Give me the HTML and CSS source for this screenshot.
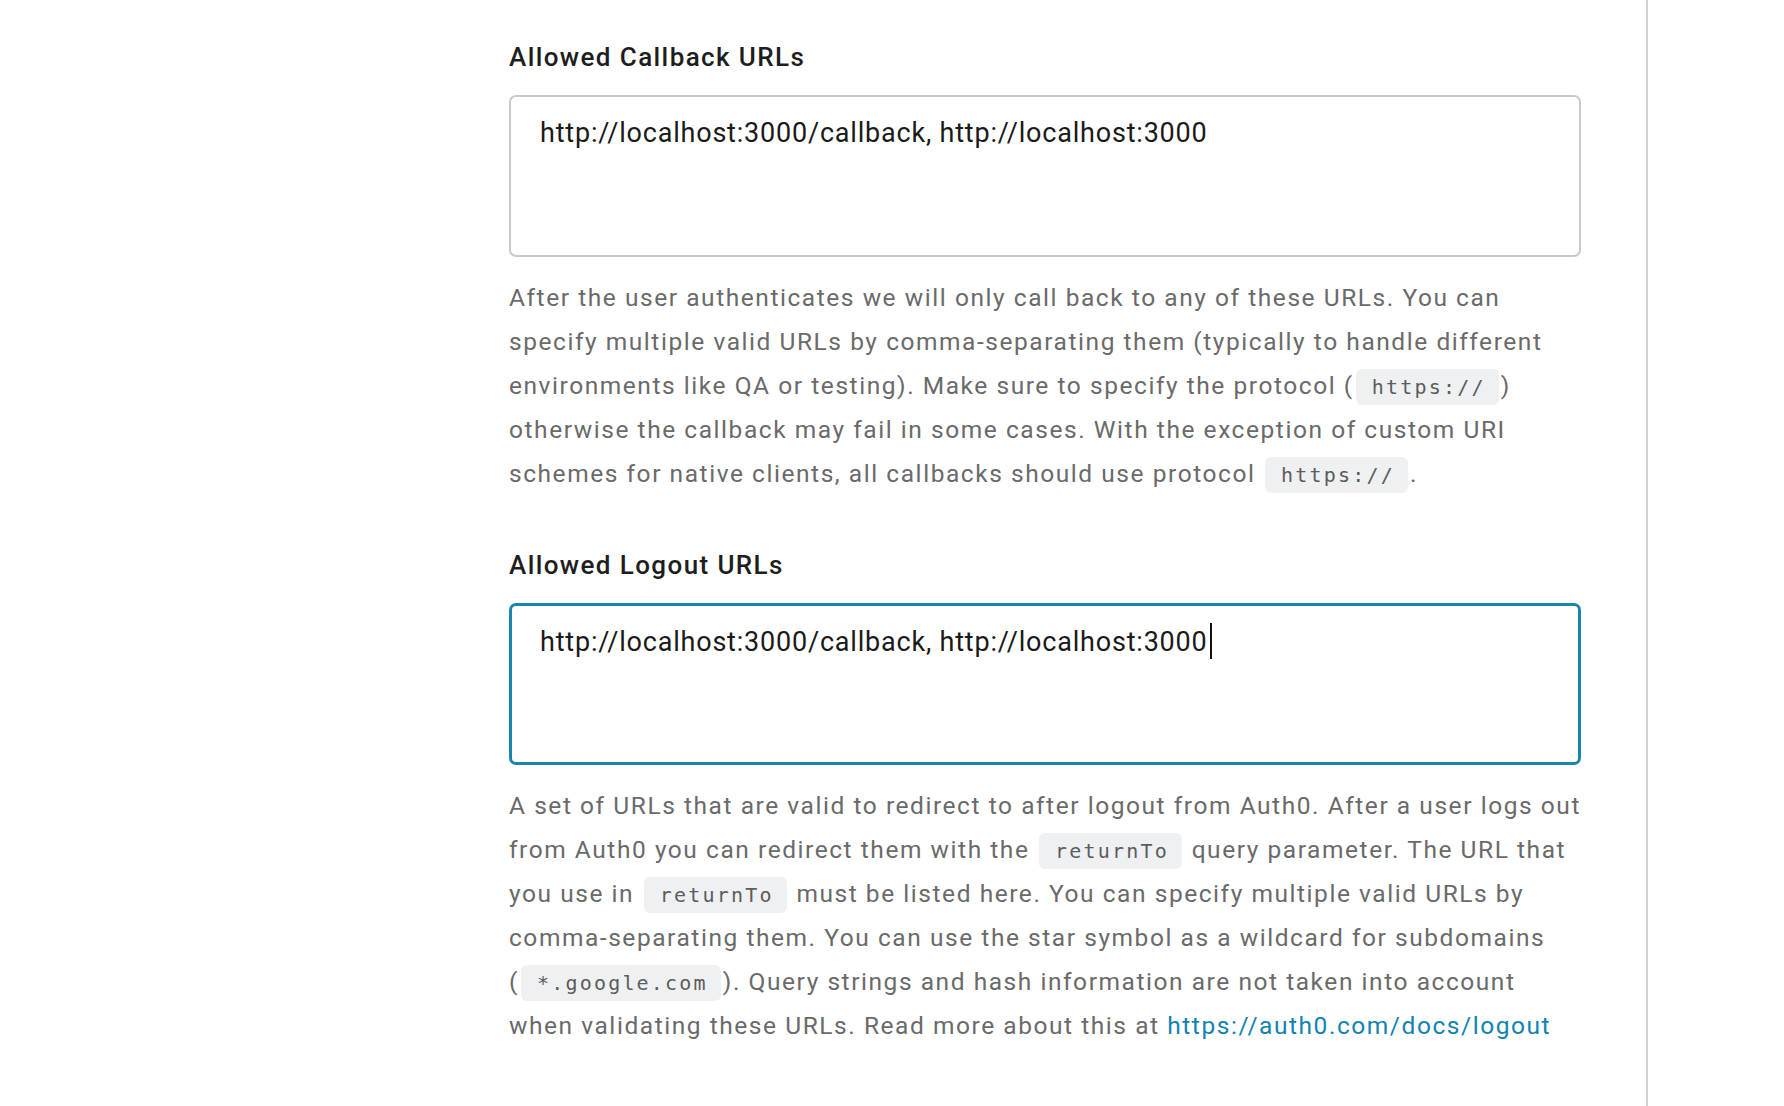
FILE: index.html
```html
<!DOCTYPE html>
<html lang="en">
<head>
<meta charset="utf-8">
<title>Application URIs</title>
<link rel="stylesheet" href="styles.css">
</head>
<body>
<div class="page">
  <main class="main">
    <section class="field">
      <label class="field-label">Allowed Callback URLs</label>
      <div class="textbox" role="textbox">http://localhost:3000/callback, http://localhost:3000</div>
      <p class="help">After the user authenticates we will only call back to any of these URLs. You can specify multiple valid URLs by comma-separating them (typically to handle different environments like QA or testing). Make sure to specify the protocol (<code class="code">https://</code>) otherwise the callback may fail in some cases. With the exception of custom URI schemes for native clients, all callbacks should use protocol <code class="code">https://</code>.</p>
    </section>
    <section class="field">
      <label class="field-label">Allowed Logout URLs</label>
      <div class="textbox textbox-focus" role="textbox">http://localhost:3000/callback, http://localhost:3000<span class="caret"></span></div>
      <p class="help">A set of URLs that are valid to redirect to after logout from Auth0. After a user logs out from Auth0 you can redirect them with the <code class="code">returnTo</code> query parameter. The URL that you use in <code class="code">returnTo</code> must be listed here. You can specify multiple valid URLs by comma-separating them. You can use the star symbol as a wildcard for subdomains (<code class="code">*.google.com</code>). Query strings and hash information are not taken into account when validating these URLs. Read more about this at <a class="link" href="#">https://auth0.com/docs/logout</a></p>
    </section>
    <section class="field">
      <label class="field-label">Allowed Web Origins</label>
    </section>
  </main>
</div>
</body>
</html>
```

FILE: styles.css
```css
html, body {
  margin: 0;
  padding: 0;
  background: #ffffff;
}

body {
  font-family: Roboto, "Liberation Sans", sans-serif;
  height: 1106px;
  overflow: hidden;
}

.page {
  display: flex;
  height: 1106px;
}

.main {
  box-sizing: border-box;
  width: 1648px;
  border-right: 2px solid #d0d0d4;
  padding: 41px 65px 0 509px;
}

.field {
  display: flex;
  flex-direction: column;
  margin-bottom: 53px;
}

.field-label {
  font-size: 26px;
  line-height: 32px;
  font-weight: 500;
  letter-spacing: 1.4px;
  color: #1e1e1e;
  margin-bottom: 22px;
}

.textbox {
  box-sizing: border-box;
  height: 162px;
  border: 2px solid #c9c9c9;
  border-radius: 7px;
  padding: 18px 29px;
  font-size: 27px;
  line-height: 36px;
  letter-spacing: 0.8px;
  color: #1a1a1a;
  white-space: nowrap;
}

.textbox-focus {
  border: 3px solid #1a86b0;
  padding: 17px 28px;
}

.caret {
  display: inline-block;
  width: 2px;
  height: 36px;
  background: #111;
  vertical-align: -8px;
  margin-left: 2px;
}

.help {
  margin: 19px 0 0 0;
  font-size: 24.5px;
  line-height: 44px;
  letter-spacing: 1.55px;
  color: #6a6a6a;
}

.code {
  font-family: "DejaVu Sans Mono", "Liberation Mono", monospace;
  font-size: 20px;
  line-height: 1;
  letter-spacing: 2.2px;
  color: #5c5c5c;
  background: #eff0f2;
  border-radius: 6px;
  padding: 6px 13px 6px 16px;
  margin: 0 2px;
}

.link {
  color: #1283b1;
  text-decoration: none;
}
```
